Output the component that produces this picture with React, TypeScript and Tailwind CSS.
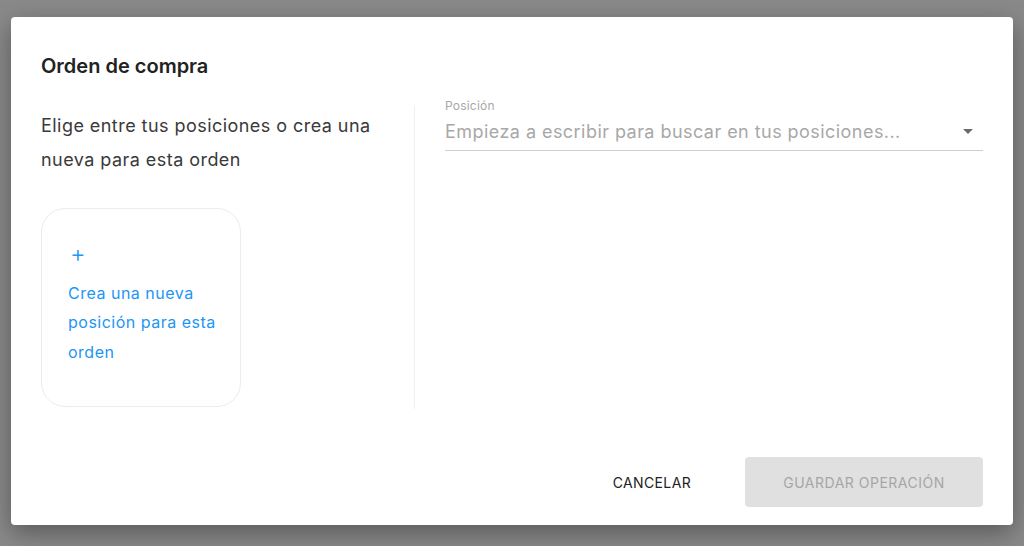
export default function App() {
  return (
    <div
      className="w-[1024px] h-[546px] bg-[#898989] pt-[17px] pl-[11px]"
      style={{ fontFamily: "Inter, 'Noto Sans', sans-serif" }}
    >
      <div className="w-[1002px] h-[508px] bg-white rounded-[4px] shadow-[0_8px_24px_rgba(0,0,0,0.35)] flex flex-col px-[30px] pt-[37px] pb-[18px]">
        {/* Header */}
        <h2 className="text-[20px] leading-[24px] font-semibold text-[#222]">Orden de compra</h2>

        {/* Body */}
        <div className="flex mt-[31px]">
          <div className="w-[374px] shrink-0 border-r border-[#f0f0f0] pb-[2px] -mt-[4px] pt-[4px]">
            <p className="text-[18px] leading-[34px] tracking-[0.45px] text-[#3a3a3a] pr-[10px]">
              Elige entre tus posiciones o crea una nueva para esta orden
            </p>
            <button className="mt-[31px] w-[200px] h-[199px] rounded-[24px] border border-[#ececec] flex flex-col items-start justify-center pl-[26px] pr-[12px] text-left text-[#2196f3]">
              <span className="text-[24px] leading-[24px] font-light ml-[2px] mb-[13px] -mt-[6px]">+</span>
              <span className="text-[16px] leading-[29.5px] tracking-[0.5px]">Crea una nueva posición para esta orden</span>
            </button>
          </div>
          <div className="flex-1 pl-[30px] -mt-[11px]">
            <label className="block text-[12px] leading-[16px] text-[#a8a8a8] tracking-[0.2px]">Posición</label>
            <div className="flex items-center border-b border-[#d0d0d0] h-[37px]">
              <span className="flex-1 text-[18px] text-[#a8a8a8] leading-[24px] tracking-[0.45px]">
                Empieza a escribir para buscar en tus posiciones...
              </span>
              <svg width="10" height="5" viewBox="0 0 10 5" className="mr-[10px] mb-[2px]">
                <path d="M0 0 L10 0 L5 5 Z" fill="#6b6b6b" />
              </svg>
            </div>
          </div>
        </div>

        {/* Footer */}
        <div className="mt-auto flex items-center justify-end gap-[24px]">
          <button className="h-[50px] px-[30px] text-[14px] tracking-[0.35px] text-[#222]">CANCELAR</button>
          <button className="h-[50px] w-[238px] rounded-[4px] bg-[#e0e0e0] text-[14px] tracking-[0.5px] text-[#a6a6a6]">
            GUARDAR OPERACIÓN
          </button>
        </div>
      </div>
    </div>
  );
}
